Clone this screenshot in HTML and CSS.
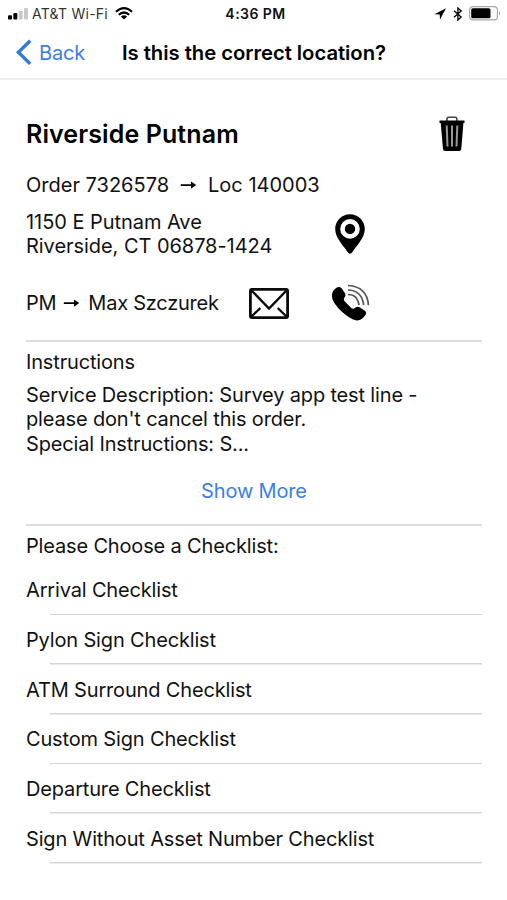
FILE: index.html
```html
<!DOCTYPE html>
<html lang="en">
<head>
<meta charset="utf-8">
<meta name="viewport" content="width=device-width, initial-scale=1">
<title>Is this the correct location?</title>
<link rel="stylesheet" href="styles.css">
</head>
<body>
<header class="status">
  <div class="status-left">
    <svg class="signal" width="20" height="12" viewBox="0 0 20 12"><rect x="0" y="7.2" width="4" height="4.3" rx="1"/><rect x="5.3" y="5" width="4" height="6.5" rx="1"/><g fill="#c9c9c9"><rect x="10.7" y="2.7" width="4" height="8.8" rx="1"/><rect x="16" y="0" width="4" height="11.5" rx="1"/></g></svg>
    <span class="carrier">AT&amp;T Wi-Fi</span>
    <svg class="wifi" width="18" height="13" viewBox="0 0 18 13"><g fill="none" stroke="#000" stroke-width="2.2"><path d="M1 4.8Q9-2.4 17 4.8"/><path d="M3.8 7.8Q9 3.2 14.2 7.8"/></g><path d="M5.9 9.5Q9 7 12.1 9.5L9 12.6Z"/></svg>
  </div>
  <span class="time">4:36 PM</span>
  <div class="status-right">
    <svg width="13" height="12" viewBox="0 0 13 12"><path d="M12 .3.4 6.2l5.3.3.3 5.1Z"/></svg>
    <svg width="10" height="14" viewBox="0 0 10 14"><path d="m1 3.7 7.2 6.2L4.9 13V1l3.3 3.1L1 10.3" fill="none" stroke="#000" stroke-width="1.3"/></svg>
    <svg width="32" height="15" viewBox="0 0 32 15"><rect x=".6" y=".6" width="27.8" height="13.3" rx="3.4" fill="none" stroke="#aaa" stroke-width="1.2"/><rect x="2.2" y="2.3" width="19.3" height="10" rx="1.6"/><path d="M30 5q2 2.3 0 4.5Z" fill="#999"/></svg>
  </div>
</header>
<nav class="nav">
  <a class="back"><svg width="16" height="27" viewBox="0 0 16 27"><path d="M14.2 1.8 2.4 13.3l11.8 11.6" fill="none" stroke="#3478e5" stroke-width="3.4"/></svg><span>Back</span></a>
  <h1>Is this the correct location?</h1>
</nav>
<main>
  <section class="heading">
    <h2>Riverside Putnam</h2>
    <svg class="trash" width="28" height="36" viewBox="0 0 28 36"><path d="M9 5V2.8Q9 1.2 10.6 1.2h6.6q1.6 0 1.6 1.6V5" fill="none" stroke="#444" stroke-width="1.6"/><path d="M1.5 4.5h25v2.6H25.4L23.3 33q-.2 2-2.2 2H7.2q-2 0-2.2-2L2.7 7.100H1.500Z"/><path d="m8.700 9.500.8 21M14 9.500v21M19.300 9.500l-.8 21" fill="none" stroke="#999" stroke-width="2"/></svg>
  </section>
  <p class="order"><span>Order 7326578</span><svg class="arrow" width="17" height="10" viewBox="0 0 17 10"><path d="M.8 4.200h10.200V1.500L16.200 5.100l-5.200 3.600V6H.8Z"/></svg><span>Loc 140003</span></p>
  <section class="address">
    <p>1150 E Putnam Ave<br>Riverside, CT 06878-1424</p>
    <svg class="pin" width="30" height="40" viewBox="0 0 30 40"><path fill-rule="evenodd" d="M15 .3C6.800.3.2 6.900.2 15c0 8.800 8.200 16.500 12.200 22.800q2.600 3.800 5.200 0C21.600 31.500 29.800 23.800 29.800 15 29.800 6.900 23.200.3 15 .3Zm0 4.800a9.800 9.800 0 1 1 0 19.600 9.800 9.800 0 0 1 0-19.600Z"/><circle cx="15" cy="14.900" r="5.200"/></svg>
  </section>
  <section class="manager">
    <p><span>PM</span><svg class="arrow" width="17" height="10" viewBox="0 0 17 10"><path d="M.8 4.200h10.200V1.500L16.200 5.100l-5.200 3.600V6H.8Z"/></svg><span>Max Szczurek</span></p>
    <svg class="mail" width="40" height="31" viewBox="0 0 40 31"><g fill="none" stroke="#0b0b0b"><rect x="1.400" y="1.400" width="37.200" height="28.200" rx="1.500" stroke-width="2.800"/><path d="m2.500 2.500 17.500 18 17.500-18M2.500 28.500l8.800-8.500M37.500 28.500 28.700 20" stroke-width="2.400"/></g></svg>
    <svg class="phone" width="38" height="37" viewBox="0 0 38 37"><path d="M9.600 4.300 13 9.300Q14.200 12 12.300 13.700 11.300 15.300 12.600 17.200L19 23.700q1.800 1.900 3.600.6 2-2.500 4.900-1l5.400 3.500q2.200 1.800.5 4.300c-3.500 6-9 6.800-14.500 3.200C12.300 30.300 5.200 24 1.500 17.400-1.500 11.500-.2 6.700 4.800 3.500q2.900-1.500 4.800.8Z"/><g fill="none" stroke="#555" stroke-width="1.700"><path d="M16 10.500q9.500 0 11 10.700"/><path d="M16 6q14 .5 15.700 15.200"/><path d="M16 1.500Q35 2.500 36.500 21.200"/></g></svg>
  </section>
  <section class="instructions">
    <h3>Instructions</h3>
    <p>Service Description: Survey app test line -<br>please don't cancel this order.<br>Special Instructions: S...</p>
    <a class="more">Show More</a>
  </section>
  <section class="checklists">
    <h3>Please Choose a Checklist:</h3>
    <ul>
      <li><span>Arrival Checklist</span></li>
      <li><span>Pylon Sign Checklist</span></li>
      <li><span>ATM Surround Checklist</span></li>
      <li><span>Custom Sign Checklist</span></li>
      <li><span>Departure Checklist</span></li>
      <li><span>Sign Without Asset Number Checklist</span></li>
    </ul>
  </section>
</main>
</body>
</html>
```
FILE: styles.css
```css
* { box-sizing: border-box; margin: 0; padding: 0; }
body {
  width: 507px;
  height: 900px;
  overflow: hidden;
  background: #fff;
  color: #111;
  font-family: Inter, "Liberation Sans", sans-serif;
  font-size: 20px;
  line-height: 24.5px;
  letter-spacing: -0.16px;
}
svg { display: block; flex: none; }
h1, h2, h3 { font-size: inherit; font-weight: 400; }
ul { list-style: none; }

.status {
  display: grid;
  grid-template-columns: 1fr auto 1fr;
  align-items: center;
  height: 27px;
  padding: 0 6px 0 8px;
  font-size: 14px;
  line-height: 26px;
  letter-spacing: 0.25px;
}
.status-left, .status-right { display: flex; align-items: center; }
.carrier { margin-left: 4px; color: #333; white-space: nowrap; }
.wifi { margin-left: 7px; }
.time { padding-left: 2px; font-weight: 600; letter-spacing: 0.45px; }
.status-right { justify-content: flex-end; gap: 6px; }

.nav {
  display: flex;
  align-items: center;
  height: 53px;
  padding: 1px 0 0 16px;
  border-bottom: 2px solid #eee;
}
.back { display: flex; align-items: center; gap: 7px; width: 106px; color: #3b7dec; }
.back svg { margin-top: -2px; }
h1 { font-size: 20.3px; font-weight: 600; letter-spacing: -0.05px; color: #000; white-space: nowrap; }

main { padding: 34px 25px 0 26px; }
.heading { display: flex; align-items: center; justify-content: space-between; height: 40px; padding-right: 16px; }
h2 { font-size: 25px; font-weight: 600; letter-spacing: 0.1px; color: #000; }

.order { display: flex; align-items: center; height: 24px; margin-top: 19px; letter-spacing: 0; }
.order .arrow { margin: 0 11px; }

.address { display: flex; align-items: center; height: 49px; margin-top: 12px; letter-spacing: -0.05px; }
.address p { width: 309px; padding-top: 1px; }
.pin { margin-top: 1px; }

.manager { display: flex; align-items: center; height: 38px; margin-top: 26px; }
.manager p { display: flex; align-items: center; width: 223px; letter-spacing: -0.25px; }
.manager .arrow { margin: 0 8px 0 7px; }
.phone { margin: -2px 0 0 43px; }

.instructions { height: 184px; margin-top: 18px; padding-top: 8px; border-top: 2px solid #ddd; }
.instructions p { margin-top: 8px; }
.more { display: block; margin-top: 23px; text-align: center; color: #3b7dec; }

.checklists { border-top: 2px solid #ddd; padding-top: 8px; }
ul { margin-top: 7px; }
li { height: 49.7px; padding-top: 12.7px; background: linear-gradient(#d6d6d6, #d6d6d6) 24px 100% / 433px 1.5px no-repeat; }
```
